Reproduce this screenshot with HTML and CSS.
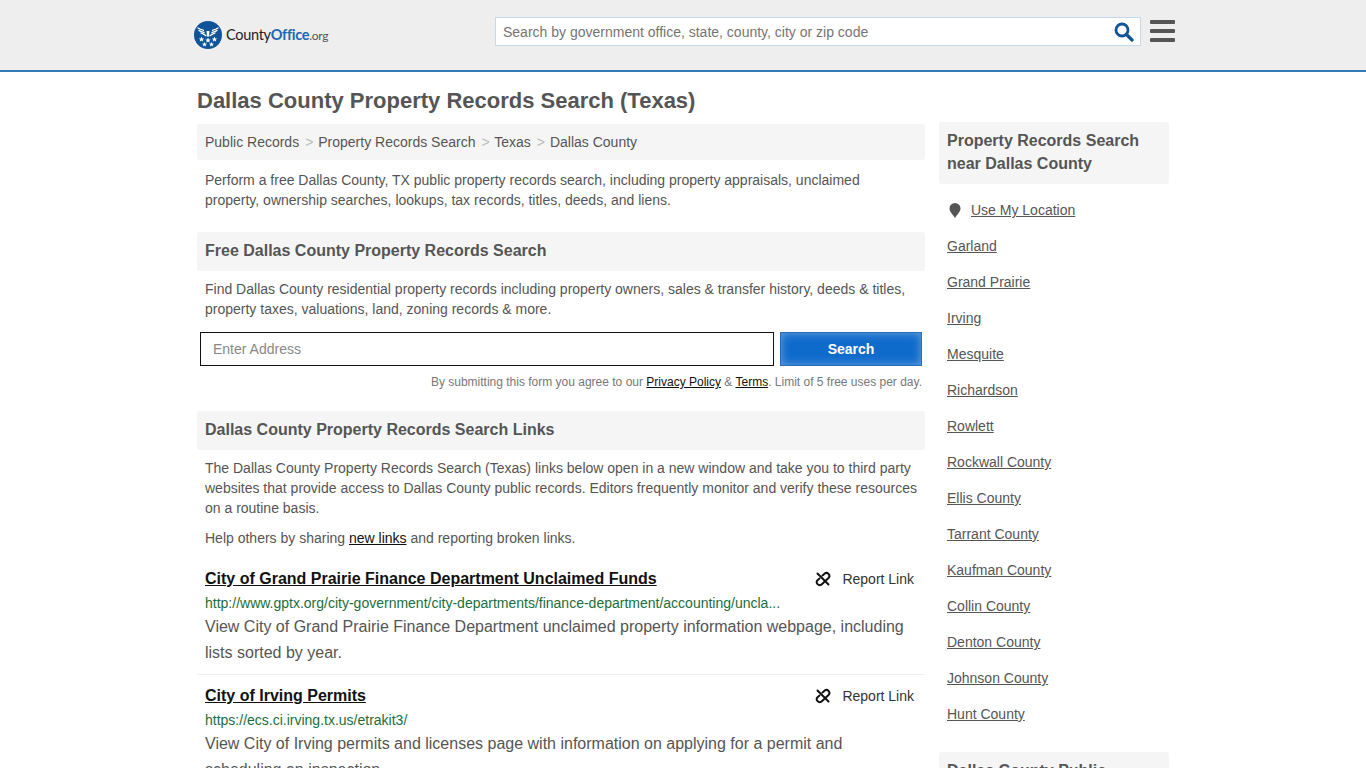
FILE: index.html
```html
<!DOCTYPE html>
<html lang="en">
<head>
    <meta charset="UTF-8">
    <meta name="viewport" content="width=device-width, initial-scale=1.0">
    <title>Dallas County Property Records Search (Texas)</title>
    <link rel="stylesheet" href="styles.css">
</head>
<body>
    <!-- Header -->
    <header class="site-header">
        <div class="header-inner">
            <a href="#" class="logo">
                <svg class="logo-mark" width="28" height="28" viewBox="0 0 28 28">
                    <circle cx="14" cy="14" r="14" fill="#0f5499"/>
                    <g fill="none" stroke="#fff" stroke-linecap="round">
                        <path d="M4 7c2 1.500 3.500 1.800 5.500 2.300" stroke-width="1.300"/>
                        <path d="M5 9.500c1.800 1.300 3.200 1.600 5 2" stroke-width="1.300"/>
                        <path d="M7 12c1.500.8 3 1.300 5 2.700" stroke-width="1.300"/>
                        <path d="M24 7c-2 1.500-3.500 1.800-5.500 2.300" stroke-width="1.300"/>
                        <path d="M23 9.500c-1.800 1.300-3.200 1.600-5 2" stroke-width="1.300"/>
                        <path d="M21 12c-1.500.8-3 1.300-5 2.700" stroke-width="1.300"/>
                    </g>
                    <path d="M12.500 10h3l-.5 5-1 1-1-1z" fill="#fff"/>
                    <g fill="#fff">
                        <polygon points="7.500,15.500 8.300,17.400 10.300,17.500 8.700,18.700 9.300,20.700 7.500,19.600 5.700,20.700 6.300,18.700 4.700,17.500 6.700,17.400"/>
                        <polygon points="14,16.500 14.800,18.400 16.800,18.500 15.200,19.700 15.800,21.700 14,20.600 12.200,21.700 12.800,19.700 11.200,18.500 13.200,18.400"/>
                        <polygon points="20.500,15.500 21.300,17.400 23.300,17.500 21.700,18.700 22.300,20.700 20.500,19.600 18.700,20.700 19.300,18.700 17.700,17.500 19.700,17.400"/>
                        <polygon points="10.500,21 11.200,22.600 13,22.700 11.600,23.800 12.100,25.500 10.500,24.600 8.900,25.500 9.400,23.800 8,22.700 9.800,22.600"/>
                        <polygon points="17.500,21 18.200,22.600 20,22.700 18.600,23.800 19.100,25.500 17.500,24.600 15.900,25.500 16.400,23.800 15,22.700 16.800,22.600"/>
                    </g>
                </svg>
                <span class="logo-text">County<b>Office</b><small>.org</small></span>
            </a>
            <form class="header-search">
                <input type="text" placeholder="Search by government office, state, county, city or zip code">
                <svg width="20" height="20" viewBox="0 0 20 20">
                    <circle cx="8" cy="8" r="6" fill="none" stroke="#0f5499" stroke-width="2.800"/>
                    <path d="M12.500 12.500L18 18" stroke="#0f5499" stroke-width="3.200" stroke-linecap="round"/>
                </svg>
            </form>
            <div class="menu-icon"><span></span><span></span><span></span></div>
        </div>
    </header>

    <div class="wrapper">
        <h1>Dallas County Property Records Search (Texas)</h1>
        <div class="columns">
            <main class="main-col">
                <nav class="breadcrumb">
                    <a href="#">Public Records</a><i>&gt;</i>
                    <a href="#">Property Records Search</a><i>&gt;</i>
                    <a href="#">Texas</a><i>&gt;</i>
                    <a href="#">Dallas County</a>
                </nav>
                <p class="intro">Perform a free Dallas County, TX public property records search, including property appraisals, unclaimed property, ownership searches, lookups, tax records, titles, deeds, and liens.</p>

                <!-- Buscador -->
                <h2 class="section-title">Free Dallas County Property Records Search</h2>
                <p class="section-text">Find Dallas County residential property records including property owners, sales &amp; transfer history, deeds &amp; titles, property taxes, valuations, land, zoning records &amp; more.</p>
                <form class="address-form">
                    <input type="text" placeholder="Enter Address">
                    <button type="button">Search</button>
                </form>
                <p class="disclaimer">By submitting this form you agree to our <a href="#">Privacy Policy</a> &amp; <a href="#">Terms</a>. Limit of 5 free uses per day.</p>

                <!-- Links -->
                <h2 class="section-title">Dallas County Property Records Search Links</h2>
                <p class="section-text links-text">The Dallas County Property Records Search (Texas) links below open in a new window and take you to third party websites that provide access to Dallas County public records. Editors frequently monitor and verify these resources on a routine basis.</p>
                <p class="help-text">Help others by sharing <a href="#">new links</a> and reporting broken links.</p>

                <article class="record">
                    <div class="record-head">
                        <a href="#" class="record-title">City of Grand Prairie Finance Department Unclaimed Funds</a>
                        <span class="report">
                            <svg width="16" height="16" viewBox="0 0 16 16"><use href="#broken-link"/></svg>
                            Report Link
                        </span>
                    </div>
                    <div class="record-url">http://www.gptx.org/city-government/city-departments/finance-department/accounting/uncla...</div>
                    <p class="record-desc">View City of Grand Prairie Finance Department unclaimed property information webpage, including lists sorted by year.</p>
                </article>
                <article class="record">
                    <div class="record-head">
                        <a href="#" class="record-title">City of Irving Permits</a>
                        <span class="report">
                            <svg width="16" height="16" viewBox="0 0 16 16"><use href="#broken-link"/></svg>
                            Report Link
                        </span>
                    </div>
                    <div class="record-url">https://ecs.ci.irving.tx.us/etrakit3/</div>
                    <p class="record-desc">View City of Irving permits and licenses page with information on applying for a permit and scheduling an inspection.</p>
                </article>
            </main>

            <aside class="side-col">
                <h3 class="side-title">Property Records Search near Dallas County</h3>
                <ul class="side-list">
                    <li class="use-location">
                        <svg width="12" height="15" viewBox="0 0 12 15"><path d="M6 15C4 11.500 .5 9 .5 5.500a5.500 5.500 0 0 1 11 0C11.500 9 8 11.500 6 15z" fill="#555"/></svg>
                        <a href="#">Use My Location</a>
                    </li>
                    <li><a href="#">Garland</a></li>
                    <li><a href="#">Grand Prairie</a></li>
                    <li><a href="#">Irving</a></li>
                    <li><a href="#">Mesquite</a></li>
                    <li><a href="#">Richardson</a></li>
                    <li><a href="#">Rowlett</a></li>
                    <li><a href="#">Rockwall County</a></li>
                    <li><a href="#">Ellis County</a></li>
                    <li><a href="#">Tarrant County</a></li>
                    <li><a href="#">Kaufman County</a></li>
                    <li><a href="#">Collin County</a></li>
                    <li><a href="#">Denton County</a></li>
                    <li><a href="#">Johnson County</a></li>
                    <li><a href="#">Hunt County</a></li>
                </ul>
                <h3 class="side-title">Dallas County Public Records</h3>
            </aside>
        </div>
    </div>

    <svg width="0" height="0" class="icon-defs">
        <symbol id="broken-link" viewBox="0 0 16 16">
            <g fill="none" stroke="#111" stroke-width="2" stroke-linecap="round" stroke-linejoin="round">
                <path d="M2.500 2.500L13.500 13.500"/>
                <path d="M7.500 4.500L9.800 2.400a3 3 0 0 1 4 4.300L6.300 13.700a3 3 0 0 1-4-4.300L4.500 7.500"/>
            </g>
        </symbol>
    </svg>
</body>
</html>
```
FILE: styles.css
```css
body {
    font-family: 'Liberation Sans', Arial, sans-serif;
    font-size: 14px;
    line-height: 20px;
    color: #555;
    background-color: #fff;
    margin: 0;
    padding: 0;
}

a {
    color: #555;
}

p {
    margin: 0;
}

.icon-defs {
    display: block;
}

/* Header */
.site-header {
    height: 70px;
    background-color: #eeeeef;
    border-bottom: 2px solid #337ab7;
}

.header-inner {
    width: 982px;
    margin-left: 194px;
    display: flex;
    align-items: flex-start;
}

.logo {
    display: flex;
    align-items: center;
    width: 301px;
    margin-top: 21px;
    text-decoration: none;
}

.logo-mark {
    flex-shrink: 0;
}

.logo-text {
    margin-left: 4px;
    font-family: 'Lato', 'Liberation Sans', sans-serif;
    font-size: 14.500px;
    letter-spacing: -0.300px;
    color: #222;
}

.logo-text b {
    font-weight: 700;
    color: #1b68b3;
}

.logo-text small {
    font-size: 12px;
    color: #555;
}

.header-search {
    width: 646px;
    height: 29px;
    margin-top: 17px;
    display: flex;
    align-items: center;
    background-color: #fff;
    border: 1px solid #c6d9e8;
    box-sizing: border-box;
    padding: 0 6px 0 7px;
}

.header-search input {
    flex: 1;
    border: none;
    outline: none;
    padding: 0;
    font-family: inherit;
    font-size: 14px;
    color: #555;
}

.header-search input::placeholder {
    color: #757575;
}

.menu-icon {
    margin-left: 9px;
    margin-top: 20px;
    width: 25px;
    display: flex;
    flex-direction: column;
    gap: 5px;
}

.menu-icon span {
    height: 4px;
    border-radius: 1px;
    background-color: #555;
}

/* Layout */
.wrapper {
    width: 972px;
    margin-left: 197px;
}

h1 {
    margin: 16px 0 10px;
    font-size: 22px;
    line-height: 26px;
    font-weight: bold;
    color: #555;
}

.columns {
    display: flex;
    gap: 14px;
}

.main-col {
    width: 728px;
    flex-shrink: 0;
}

.side-col {
    width: 230px;
    margin-top: -2px;
}

.breadcrumb {
    background-color: #f5f5f5;
    border-radius: 3px;
    padding: 8px;
    height: 20px;
}

.breadcrumb a {
    text-decoration: none;
}

.breadcrumb i {
    font-style: normal;
    color: #bbb;
    margin: 0 1px 0 6px;
}

.intro {
    padding: 10px 8px 0;
    margin-bottom: 22px;
}

.section-title {
    margin: 0;
    padding: 7px 8px 9px;
    height: 23px;
    line-height: 23px;
    background-color: #f5f5f5;
    border-radius: 3px;
    font-size: 16px;
    font-weight: bold;
    color: #555;
}

.section-text {
    padding: 8px 8px 0;
}

.address-form {
    display: flex;
    gap: 6px;
    margin: 13px 3px 0;
}

.address-form input {
    flex: 1;
    height: 34px;
    box-sizing: border-box;
    border: 1px solid #111;
    padding: 0 12px;
    font-family: inherit;
    font-size: 14px;
    color: #555;
}

.address-form input::placeholder {
    color: #888;
}

.address-form button {
    width: 142px;
    height: 34px;
    border: 1px solid #2a6fb5;
    background-color: #0f6bcb;
    box-shadow: inset 0 0 10px rgba(130, 175, 225, 0.800);
    color: #fff;
    font-family: inherit;
    font-size: 14px;
    font-weight: bold;
    cursor: pointer;
}

.disclaimer {
    padding: 6px 3px 0;
    margin-bottom: 19px;
    text-align: right;
    font-size: 12px;
    line-height: 20px;
    color: #777;
}

.disclaimer a, .help-text a {
    color: #111;
}

.help-text {
    padding: 10px 8px 0;
}

/* Records */
.record {
    padding: 11px 11px 8px 8px;
    border-bottom: 1px solid #eee;
}

.help-text + .record {
    padding-top: 21px;
}

.record-head {
    display: flex;
    justify-content: space-between;
    align-items: center;
}

.record-title {
    font-size: 16px;
    font-weight: bold;
    line-height: 20px;
    color: #111;
}

.report {
    display: flex;
    align-items: center;
    gap: 11px;
    color: #333;
    line-height: 20px;
}

.record-url {
    margin-top: 4px;
    color: #1b6e3c;
    line-height: 20px;
}

.record-desc {
    margin-top: 1px;
    font-size: 16px;
    line-height: 26px;
}

/* Sidebar */
.side-title {
    margin: 0;
    padding: 7px 8px 9px;
    background-color: #f5f5f5;
    border-radius: 3px;
    font-size: 16px;
    line-height: 23px;
    font-weight: bold;
    color: #555;
}

.side-list {
    list-style: none;
    margin: 0 0 20px;
    padding: 8px 8px 0;
}

.side-list li {
    height: 36px;
    display: flex;
    align-items: center;
}

.use-location {
    padding-left: 2px;
    gap: 10px;
}
```
